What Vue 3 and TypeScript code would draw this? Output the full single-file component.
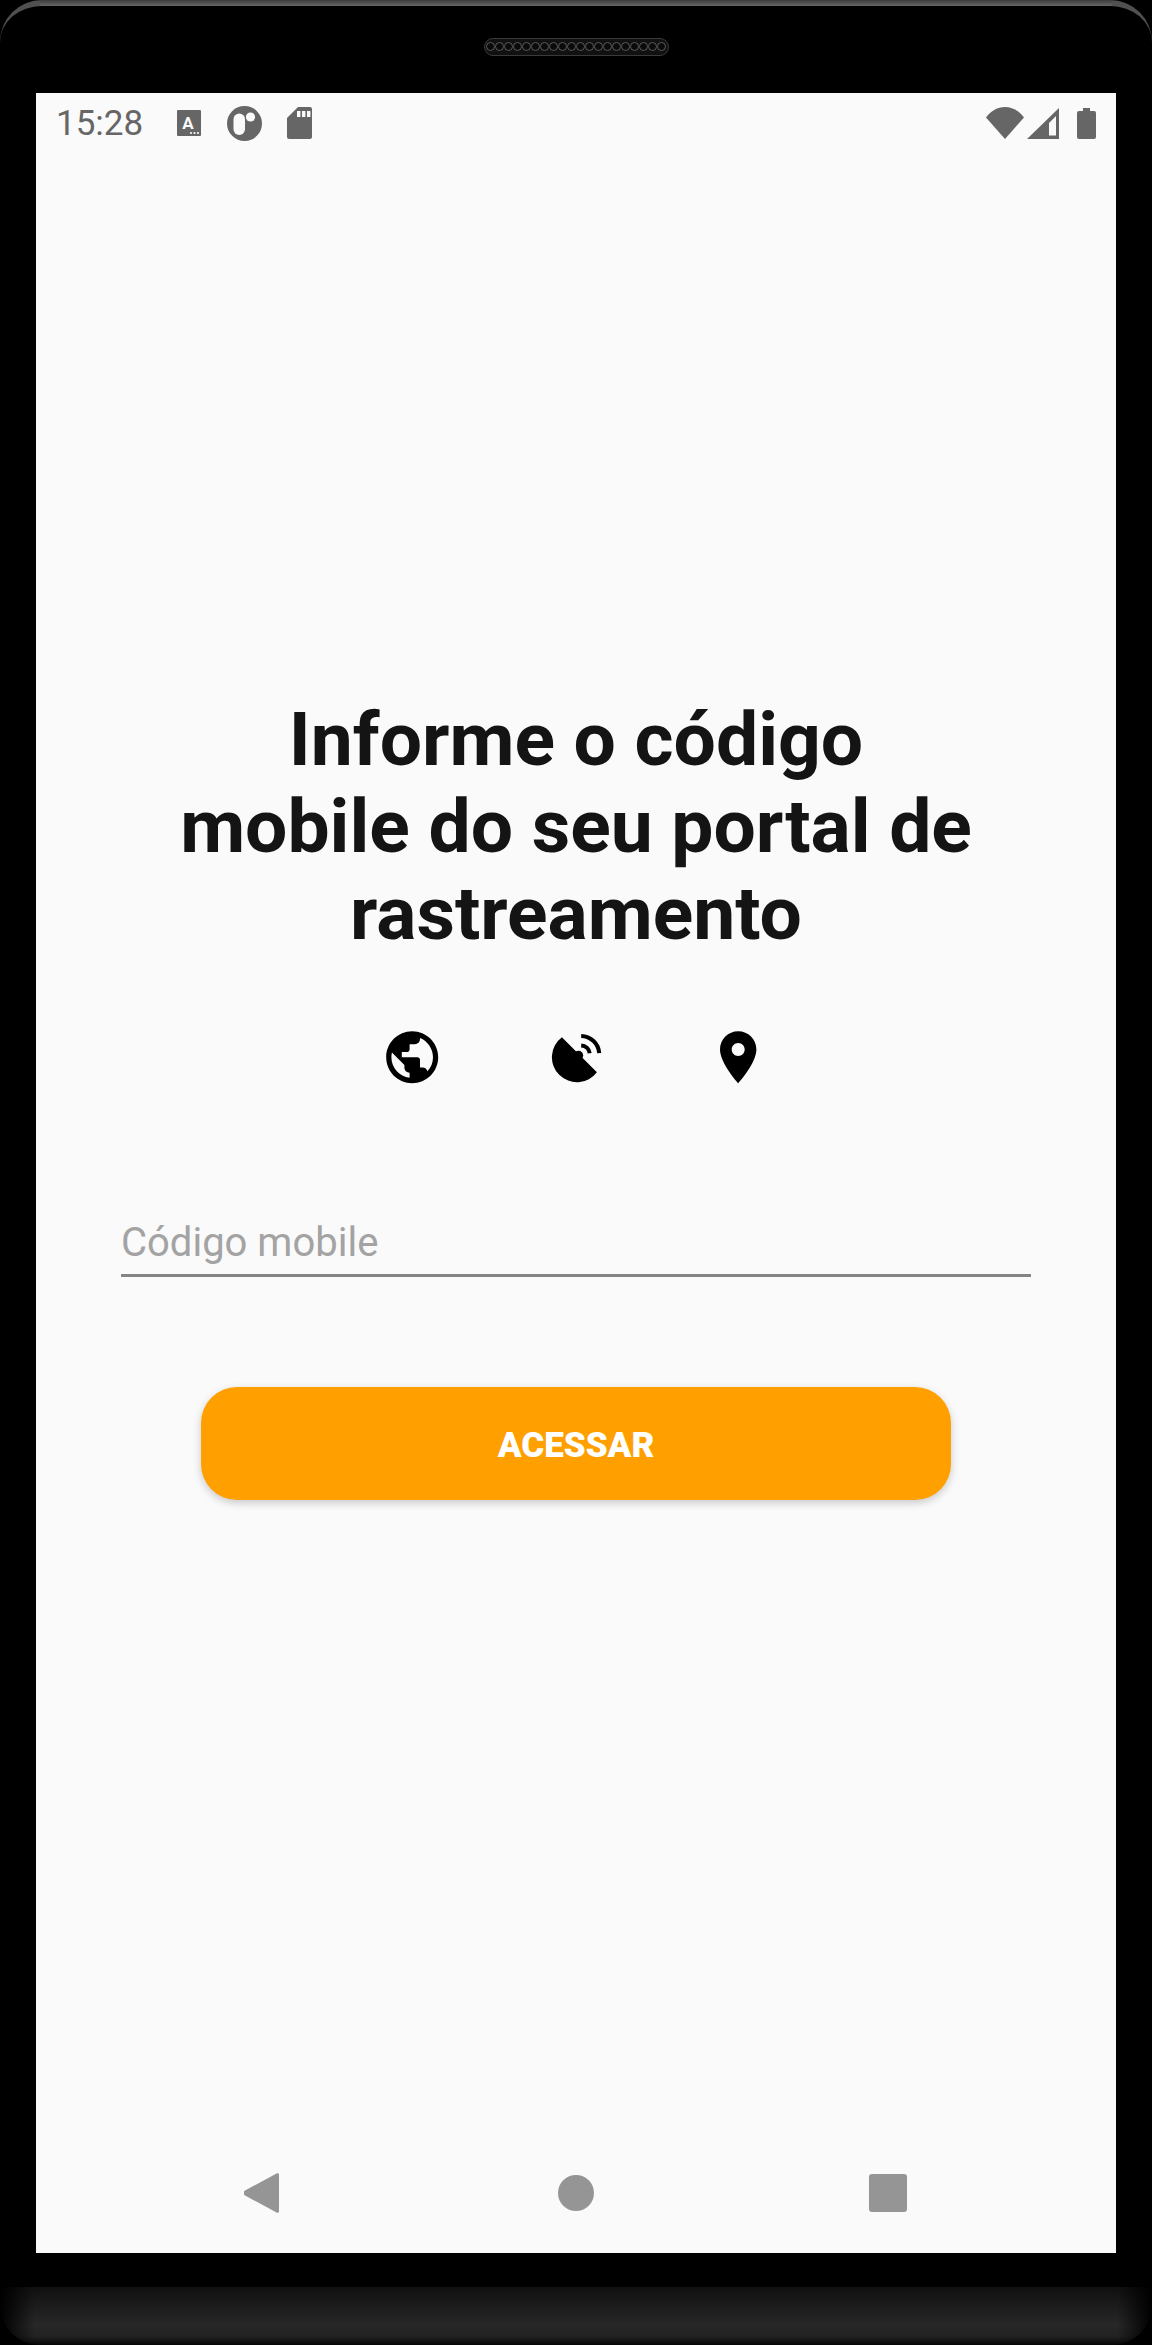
<script setup lang="ts">
const speakerDots = Array.from({ length: 20 }, (_, i) => i);
</script>

<template>
  <div class="phone">
    <div class="top-bezel">
      <div class="speaker">
        <span v-for="d in speakerDots" :key="d" class="speaker-dot" />
      </div>
    </div>

    <div class="screen">
      <div class="status-bar">
        <span class="clock">15:28</span>
        <svg class="st-a" viewBox="0 0 24 26" width="24" height="26">
          <path fill="#666" d="M1 0h22a1 1 0 0 1 1 1v24a1 1 0 0 1-1 1H1a1 1 0 0 1-1-1V1a1 1 0 0 1 1-1z" />
          <text x="11" y="19" class="st-a-letter" text-anchor="middle">A</text>
          <circle cx="14" cy="23" r="1.1" fill="#fafafa" />
          <circle cx="17.5" cy="23" r="1.1" fill="#fafafa" />
          <circle cx="21" cy="23" r="1.1" fill="#fafafa" />
        </svg>
        <svg class="st-circle" viewBox="0 0 35 35" width="35" height="35">
          <circle cx="17.5" cy="17.5" r="17.5" fill="#666" />
          <rect x="6.500" y="7.500" width="11.500" height="21.500" rx="5.750" fill="#fafafa" />
          <circle cx="23.500" cy="11" r="4.600" fill="#fafafa" />
        </svg>
        <svg class="st-sd" viewBox="0 0 25 32" width="25" height="32">
          <path fill="#666" d="M11 0h12a2 2 0 0 1 2 2v28a2 2 0 0 1-2 2H2a2 2 0 0 1-2-2V11z" />
          <rect x="10" y="4" width="3.4" height="6" fill="#fafafa" />
          <rect x="15" y="4" width="3.4" height="6" fill="#fafafa" />
          <rect x="20" y="4" width="3.4" height="6" fill="#fafafa" />
        </svg>
        <div class="status-right">
          <svg viewBox="0 0 38 32" width="38" height="32">
            <path fill="#666" d="M0 10.5C5 3.8 11.5 0 19 0s14 3.8 19 10.5L19 32z" />
          </svg>
          <svg class="st-signal" viewBox="0 0 32 31" width="32" height="31">
            <path fill="#666" d="M32 0v31H0zM29 8 22 15V27.500h7z" fill-rule="evenodd" />
          </svg>
          <svg class="st-battery" viewBox="0 0 19 31" width="19" height="31">
            <path fill="#666" d="M6 0h7v3h4a2 2 0 0 1 2 2v24a2 2 0 0 1-2 2H2a2 2 0 0 1-2-2V5a2 2 0 0 1 2-2h4z" />
          </svg>
        </div>
      </div>

      <main class="content">
        <h1 class="title">Informe o código<br />mobile do seu portal de<br />rastreamento</h1>

        <div class="icons">
          <svg viewBox="0 0 24 24" width="62.400" height="62.400">
            <path d="M12 2C6.480 2 2 6.480 2 12s4.480 10 10 10 10-4.480 10-10S17.520 2 12 2zm-1 17.930c-3.950-.490-7-3.850-7-7.930 0-.620.080-1.210.210-1.790L9 15v1c0 1.100.9 2 2 2v1.930zm6.900-2.540c-.260-.810-1-1.390-1.900-1.390h-1v-3c0-.550-.450-1-1-1H8v-2h2c.550 0 1-.450 1-1V7h2c1.100 0 2-.9 2-2v-.410c2.930 1.190 5 4.060 5 7.410 0 2.080-.8 3.970-2.100 5.390z" />
          </svg>
          <svg viewBox="-1.200 -1.200 62.400 62.400" width="62.400" height="62.400">
            <path d="M16.700 10 51.700 45A25 25 0 1 1 16.700 10z" />
            <circle cx="33.300" cy="28.300" r="4.700" />
            <path class="wave" d="M36 8.700A18.500 18.500 0 0 1 54 26" />
            <path class="wave" d="M36 18.200A9 9 0 0 1 44.500 26" />
          </svg>
          <svg viewBox="0 0 24 24" width="62.400" height="62.400">
            <path d="M12 2C8.130 2 5 5.130 5 9c0 5.250 7 13 7 13s7-7.750 7-13c0-3.870-3.130-7-7-7zm0 9.500c-1.380 0-2.500-1.120-2.500-2.500s1.120-2.500 2.500-2.500 2.500 1.120 2.500 2.500-1.120 2.500-2.500 2.500z" />
          </svg>
        </div>

        <input class="code-input" type="text" placeholder="Código mobile" />

        <button class="access-btn" type="button">ACESSAR</button>
      </main>

      <div class="nav-bar">
        <svg viewBox="0 0 35 40" width="35" height="40">
          <path fill="#959595" d="M33 .3 1 17.500a3 3 0 0 0 0 5L33 39.700a1.500 1.500 0 0 0 2-1.200V1.500a1.500 1.500 0 0 0-2-1.200z" />
        </svg>
        <span class="nav-home" />
        <span class="nav-recent" />
      </div>
    </div>

    <div class="chin" />
    <div class="bottom-shell" />
  </div>
</template>

<style>
html,
body {
  margin: 0;
  background: #000;
}
</style>

<style scoped>
.phone {
  position: relative;
  width: 1152px;
  height: 2345px;
  background: #000;
  overflow: hidden;
  font-family: Roboto, "Liberation Sans", sans-serif;
}

.top-bezel {
  position: relative;
  height: 93px;
  display: flex;
  align-items: center;
  justify-content: center;
  box-sizing: border-box;
  border-top: 6px solid #505050;
  border-radius: 42px 42px 0 0;
  background: #000;
}

.top-bezel::before {
  content: "";
  position: absolute;
  top: -6px;
  left: 40px;
  right: 40px;
  height: 6px;
  background: linear-gradient(#3c3c3c, #666);
}

.speaker {
  display: flex;
  align-items: center;
  padding: 0 1.500px;
  height: 16px;
  margin-top: -6px;
  border: 1px solid #3a3a3a;
  border-radius: 9px;
  background: #111;
}

.speaker-dot {
  box-sizing: border-box;
  width: 9px;
  height: 9px;
  border-radius: 50%;
  border: 1px solid #5a5a5a;
  background: #0a0a0a;
}

.screen {
  height: 2160px;
  margin: 0 36px;
  background: #fafafa;
  display: flex;
  flex-direction: column;
}

.status-bar {
  height: 60px;
  flex-shrink: 0;
  display: flex;
  align-items: center;
  padding: 0 20px 0 20px;
  color: #666;
}

.clock {
  font-size: 35px;
  width: 121px;
  padding-top: 2px;
  line-height: 58px;
}

.st-a {
  margin-right: 26px;
}

.st-circle {
  margin-right: 25px;
}

.st-a-letter {
  font-family: Roboto, sans-serif;
  font-weight: 700;
  font-size: 17px;
  fill: #fafafa;
}

.status-right {
  margin-left: auto;
  display: flex;
  align-items: center;
  gap: 3px;
}

.st-battery {
  margin-left: 15px;
}

.content {
  flex: 1;
  display: flex;
  flex-direction: column;
  align-items: center;
}

.title {
  margin: 543px 0 0;
  font-size: 75px;
  line-height: 87px;
  font-weight: 700;
  color: #141414;
  text-align: center;
}

.icons {
  margin: 69px 2px 0 0;
  display: flex;
  gap: 100.600px;
}

.wave {
  fill: none;
  stroke: #000;
  stroke-width: 4;
}

.code-input {
  width: 910px;
  height: 67px;
  margin-top: 122px;
  box-sizing: border-box;
  padding: 0;
  border: 0;
  border-bottom: 3px solid #858585;
  border-radius: 0;
  outline: 0;
  background: transparent;
  font-family: Roboto, sans-serif;
  font-size: 40px;
  color: #333;
}

.code-input::placeholder {
  color: #a3a3a3;
  opacity: 1;
}

.access-btn {
  width: 750px;
  height: 113px;
  margin-top: 109.500px;
  padding: 4px 0 0;
  border: 0;
  border-radius: 36px;
  background: #ff9f00;
  box-shadow: 0 3px 8px rgba(0, 0, 0, 0.2);
  color: #fff;
  font-family: Roboto, sans-serif;
  font-size: 35px;
  font-weight: 900;
}

.nav-bar {
  height: 120px;
  flex-shrink: 0;
  position: relative;
  display: flex;
  align-items: center;
  padding-left: 208px;
}

.nav-home {
  width: 36px;
  height: 36px;
  margin-left: 279px;
  border-radius: 50%;
  background: #959595;
}

.nav-recent {
  width: 38px;
  height: 38px;
  margin-left: 275px;
  border-radius: 3px;
  background: #959595;
}

.chin {
  height: 34px;
}

.bottom-shell {
  position: relative;
  height: 58px;
  border-radius: 0 0 40px 40px;
  background: linear-gradient(#101010, #272727 65%, #222 85%, #060606);
}

.bottom-shell::after {
  content: "";
  position: absolute;
  inset: 0;
  background: linear-gradient(90deg, #000, transparent 3%, transparent 97%, #000);
}
</style>
